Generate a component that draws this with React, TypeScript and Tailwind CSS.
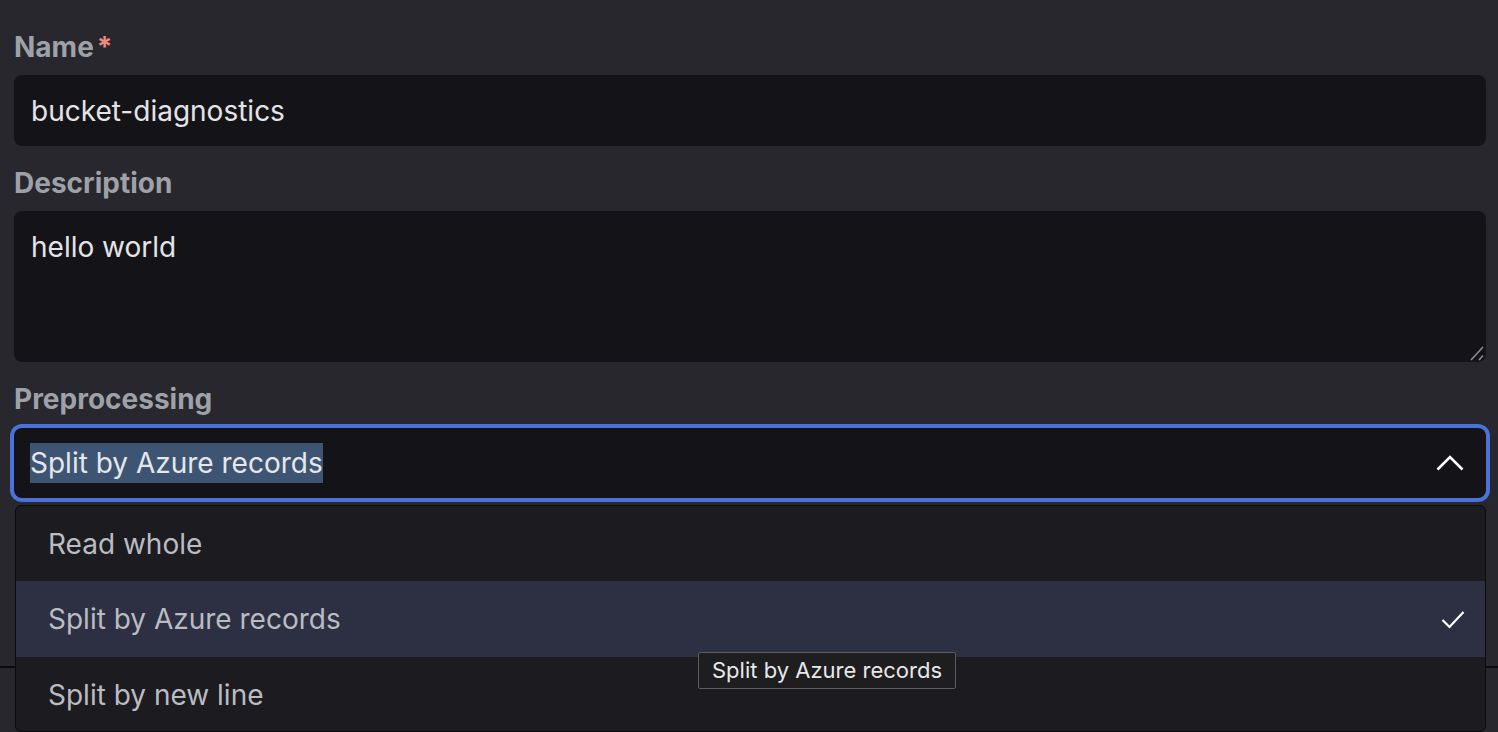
import React from "react";

const font = "font-['Inter','Noto_Sans',sans-serif]";

function Label({ children, required }: { children: React.ReactNode; required?: boolean }) {
  return (
    <div className="flex h-[36px] items-center text-[28px] font-bold leading-[36px] text-[#9ea1a7]">
      <span>{children}</span>
      {required && <span className="ml-[3px] text-[#f08b7f]">*</span>}
    </div>
  );
}

export default function App() {
  return (
    <div className={`${font} relative h-[732px] w-full overflow-hidden bg-[#27272d] text-[#e4e4e7]`}>
      <div className="flex flex-col pl-[14px] pr-[12px] pt-[29px]">
        <Label required>Name</Label>
        <div className="mt-[10px] flex h-[71px] items-center rounded-[8px] bg-[#141418] pl-[17px] text-[28px]">
          bucket-diagnostics
        </div>

        <div className="mt-[19px]">
          <Label>Description</Label>
        </div>
        <div className="relative mt-[10px] h-[151px] rounded-[8px] bg-[#141418] pl-[17px] pt-[17px] text-[28px] leading-[38px]">
          hello world
          <svg className="absolute bottom-[1px] right-[2px]" width="14" height="16" viewBox="0 0 14 16">
            <line x1="1" y1="15" x2="13" y2="2" stroke="#8d8d90" strokeWidth="1.6" />
            <line x1="9" y1="15" x2="13" y2="10.5" stroke="#8d8d90" strokeWidth="1.6" />
          </svg>
        </div>

        <div className="mt-[19px]">
          <Label>Preprocessing</Label>
        </div>
        <div className="mt-[11px] flex h-[70px] items-center justify-between rounded-[8px] bg-[#141418] pl-[16px] pr-[22px] shadow-[0_0_0_4px_#4a72d8]">
          <span className="bg-[#3d5573] text-[28px] leading-[40px] text-[#e6e7ea]">Split by Azure records</span>
          <svg width="28" height="16" viewBox="0 0 28 16">
            <polyline points="1.5,14.5 14,2 26.5,14.5" fill="none" stroke="#ffffff" strokeWidth="2.6" />
          </svg>
        </div>
      </div>

      {/* footer divider behind the menu */}
      <div className="absolute left-0 right-0 top-[666px] h-[2px] bg-[#0c0c0f]" />

      {/* dropdown menu */}
      <div className="absolute left-[15px] right-[12px] top-[505px] h-[227px] overflow-hidden rounded-[6px] border border-[#0b0b0d] bg-[#1c1c20] text-[28px] text-[#bbbbc2]">
        <div className="flex h-[75px] items-center pl-[32px]">Read whole</div>
        <div className="flex h-[76px] items-center justify-between bg-[#2c3042] pl-[32px] pr-[20px]">
          <span>Split by Azure records</span>
          <svg width="24" height="19" viewBox="0 0 24 19">
            <polyline points="1.5,10 8.5,17 22.5,2" fill="none" stroke="#ffffff" strokeWidth="2.2" />
          </svg>
        </div>
        <div className="flex h-[76px] items-center pl-[32px]">Split by new line</div>
      </div>

      {/* tooltip */}
      <div className="absolute left-[698px] top-[652px] flex h-[37px] items-center rounded-[2px] border border-[#5c5c60] bg-[#1e1e21] px-[13px] text-[22px] text-[#e8e8ea]">
        Split by Azure records
      </div>
    </div>
  );
}
